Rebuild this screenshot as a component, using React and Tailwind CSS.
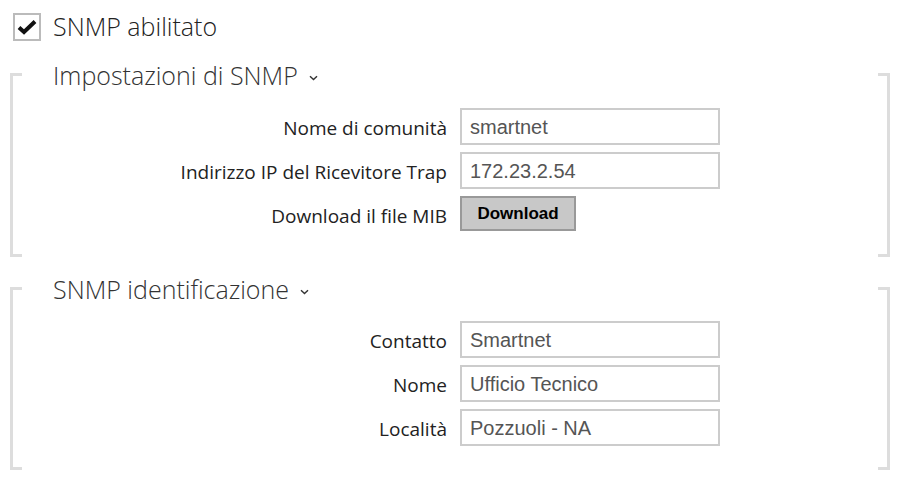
import React from "react";

function Chevron() {
  return (
    <svg width="9" height="6" viewBox="0 0 9 6" className="ml-[11px] mt-[4px]">
      <path d="M1 1.2 L4.5 4.6 L8 1.2" fill="none" stroke="#333" strokeWidth="1.4" />
    </svg>
  );
}

function Corners() {
  return (
    <>
      <span className="absolute left-0 top-0 w-[9px] h-[3px] bg-[#dddddd]" />
      <span className="absolute left-0 bottom-0 w-[9px] h-[3px] bg-[#dddddd]" />
      <span className="absolute right-0 top-0 w-[9px] h-[3px] bg-[#dddddd]" />
      <span className="absolute right-0 bottom-0 w-[9px] h-[3px] bg-[#dddddd]" />
    </>
  );
}

function Row({ label, children }) {
  return (
    <div className="flex items-start">
      <div className="w-[434px] h-[37px] pt-[3px] flex items-center justify-end text-[19px] text-[#222]">{label}</div>
      <div className="ml-[13px]">{children}</div>
    </div>
  );
}

function Input({ value }) {
  return (
    <div
      className="w-[260px] h-[37px] border-2 border-[#cccccc] bg-white flex items-center pl-[8px] text-[20px] text-[#555]"
      style={{ fontFamily: '"Liberation Sans", Arial, sans-serif' }}
    >
      {value}
    </div>
  );
}

function Section({ title, children, className }) {
  return (
    <div className={"relative flex flex-col mx-[10px] border-l-[3px] border-r-[3px] border-[#dddddd] " + className}>
      <Corners />
      <div className="flex items-center pl-[40px] -mt-[13px] h-[32px] text-[25px] font-light text-[#333]">
        {title}
        <Chevron />
      </div>
      {children}
    </div>
  );
}

export default function App() {
  return (
    <div
      className="w-[900px] h-[486px] bg-white pt-[13px]"
      style={{ fontFamily: '"Open Sans", "Noto Sans", sans-serif' }}
    >
      <div className="flex items-center pl-[13px] h-[28px]">
        <div className="w-[28px] h-[28px] border-2 border-[#bbbbbb] flex items-center justify-center">
          <svg width="20" height="16" viewBox="0 0 20 16">
            <path d="M2 8.5 L7 13 L18 2.5" fill="none" stroke="#111" strokeWidth="4" />
          </svg>
        </div>
        <span className="ml-[12px] text-[25px] font-light text-[#222]">SNMP abilitato</span>
      </div>

      <Section title="Impostazioni di SNMP" className="mt-[32px] h-[184px]">
        <div className="mt-[16px] flex flex-col gap-[7px]">
          <Row label="Nome di comunità"><Input value="smartnet" /></Row>
          <Row label="Indirizzo IP del Ricevitore Trap"><Input value="172.23.2.54" /></Row>
          <Row label="Download il file MIB">
            <button
              className="w-[116px] h-[35px] bg-[#c8c8c8] border-2 border-[#999999] text-[17px] font-bold text-black"
              style={{ fontFamily: '"Liberation Sans", Arial, sans-serif' }}
            >
              Download
            </button>
          </Row>
        </div>
      </Section>

      <Section title="SNMP identificazione" className="mt-[30px] h-[183px]">
        <div className="mt-[15px] flex flex-col gap-[7px]">
          <Row label="Contatto"><Input value="Smartnet" /></Row>
          <Row label="Nome"><Input value="Ufficio Tecnico" /></Row>
          <Row label="Località"><Input value="Pozzuoli - NA" /></Row>
        </div>
      </Section>
    </div>
  );
}
